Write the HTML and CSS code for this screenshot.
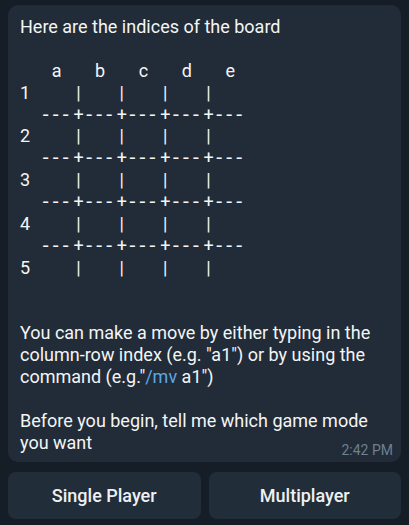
FILE: index.html
```html
<!DOCTYPE html>
<html>
<head>
<meta charset="utf-8">
<link rel="stylesheet" href="styles.css">
</head>
<body>
<div class="chat">
  <div class="bubble">
    <div class="text">
      <div class="line">Here are the indices of the board</div>
      <div class="board">
        <div class="brow"><span class="c1">a</span><span class="c2">b</span><span class="c3">c</span><span class="c4">d</span><span class="c5">e</span></div>
        <div class="brow"><span class="lbl">1</span><span class="s1">|</span><span class="s2">|</span><span class="s3">|</span><span class="s4">|</span></div>
        <div class="brow dash"><span class="c1">---</span><span class="s1">+</span><span class="c2">---</span><span class="s2">+</span><span class="c3">---</span><span class="s3">+</span><span class="c4">---</span><span class="s4">+</span><span class="c5">---</span></div>
        <div class="brow"><span class="lbl">2</span><span class="s1">|</span><span class="s2">|</span><span class="s3">|</span><span class="s4">|</span></div>
        <div class="brow dash"><span class="c1">---</span><span class="s1">+</span><span class="c2">---</span><span class="s2">+</span><span class="c3">---</span><span class="s3">+</span><span class="c4">---</span><span class="s4">+</span><span class="c5">---</span></div>
        <div class="brow"><span class="lbl">3</span><span class="s1">|</span><span class="s2">|</span><span class="s3">|</span><span class="s4">|</span></div>
        <div class="brow dash"><span class="c1">---</span><span class="s1">+</span><span class="c2">---</span><span class="s2">+</span><span class="c3">---</span><span class="s3">+</span><span class="c4">---</span><span class="s4">+</span><span class="c5">---</span></div>
        <div class="brow"><span class="lbl">4</span><span class="s1">|</span><span class="s2">|</span><span class="s3">|</span><span class="s4">|</span></div>
        <div class="brow dash"><span class="c1">---</span><span class="s1">+</span><span class="c2">---</span><span class="s2">+</span><span class="c3">---</span><span class="s3">+</span><span class="c4">---</span><span class="s4">+</span><span class="c5">---</span></div>
        <div class="brow"><span class="lbl">5</span><span class="s1">|</span><span class="s2">|</span><span class="s3">|</span><span class="s4">|</span></div>
      </div>
      <p class="para first">You can make a move by either typing in the column-row index (e.g. "a1") or by using the command (e.g."<span class="cmd">/mv</span> a1")</p>
      <p class="para"><span>Before you begin, tell me which game mode you want</span><span class="meta">2:42 PM</span></p>
    </div>
  </div>
  <div class="buttons">
    <div class="btn">Single Player</div>
    <div class="btn">Multiplayer</div>
  </div>
</div>
</body>
</html>
```
FILE: styles.css
```css
html, body {
  margin: 0;
  padding: 0;
  background: #151e27;
}
body {
  width: 409px;
  height: 525px;
  overflow: hidden;
  font-family: Roboto, "Liberation Sans", sans-serif;
  color: #f4f5f6;
}
.chat {
  padding: 5px 8px 0 8px;
  display: flex;
  flex-direction: column;
  gap: 10px;
}
.bubble {
  background: #212c38;
  border-radius: 10px;
  padding: 11px 8px 4px 12px;
  display: flow-root;
}
.text {
  font-size: 18px;
  line-height: 21.9px;
}
.line {
  height: 21.9px;
}
.board {
  margin-top: 21.9px;
}
.brow {
  display: grid;
  grid-template-columns: 20px repeat(4, 33.4px 10px) 33.4px;
  height: 21.9px;
  text-align: center;
}
.brow .lbl { grid-column: 1; text-align: left; }
.brow .c1 { grid-column: 2; }
.brow .s1 { grid-column: 3; }
.brow .c2 { grid-column: 4; }
.brow .s2 { grid-column: 5; }
.brow .c3 { grid-column: 6; }
.brow .s3 { grid-column: 7; }
.brow .c4 { grid-column: 8; }
.brow .s4 { grid-column: 9; }
.brow .c5 { grid-column: 10; }
.dash .c1, .dash .c2, .dash .c3, .dash .c4, .dash .c5 {
  font-size: 21px;
  letter-spacing: 4.2px;
  margin-left: 2.2px;
  white-space: nowrap;
}
.para {
  margin: 0;
  margin-top: 21.9px;
}
.para.first {
  margin-top: 43.8px;
}
.cmd {
  color: #5ea7e6;
}
.meta {
  float: right;
  font-size: 14px;
  line-height: 16px;
  color: #6f7f8e;
  margin-top: 10.4px;
}
.buttons {
  display: flex;
  gap: 8px;
}
.btn {
  flex: 1;
  height: 47px;
  background: #222d3a;
  border-radius: 8px;
  display: flex;
  align-items: center;
  justify-content: center;
  font-size: 18px;
  font-weight: 500;
  color: #eef0f2;
}
```
